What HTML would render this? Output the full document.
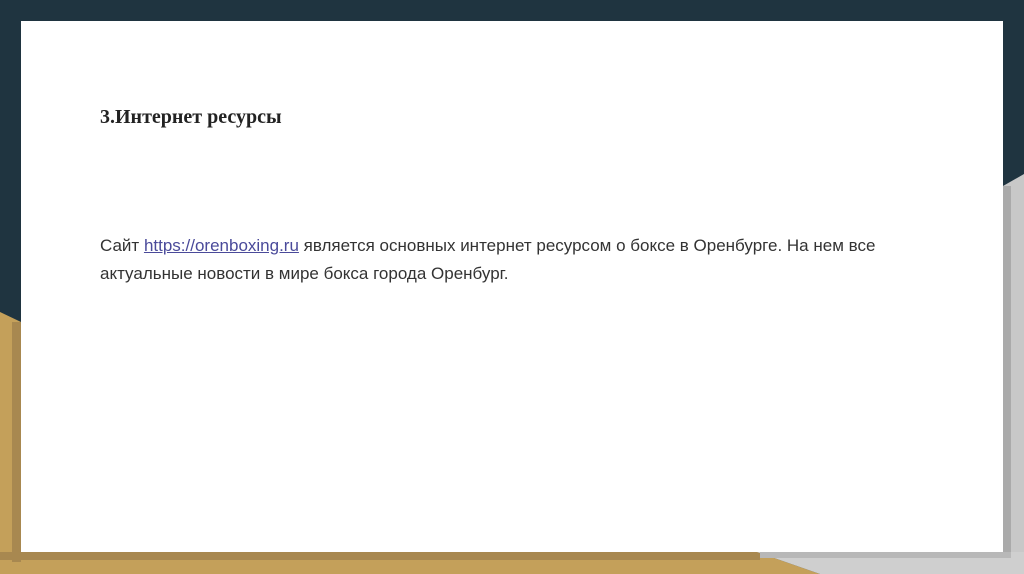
<!DOCTYPE html>
<html><head><meta charset="utf-8"><style>
html,body{margin:0;padding:0;width:1024px;height:574px;overflow:hidden;background:#1f3440;position:relative}
.gold{position:absolute;left:0;top:0;width:1024px;height:574px}
.card{position:absolute;left:21px;top:21px;width:982px;height:531px;background:#fff}
h1{position:absolute;left:100px;top:106px;margin:0;font:bold 20px "Liberation Serif",serif;color:#222;white-space:nowrap}
p{position:absolute;left:100px;top:232px;margin:0;width:900px;font:17px/28px "Liberation Sans",sans-serif;color:#333;white-space:nowrap}
a{color:#4a4a9a;text-decoration:underline}
</style></head><body>
<svg class="gold" width="1024" height="574">
<polygon points="0,312 21,322 21,574 0,574" fill="#c4a05a"/>
<polygon points="1003,186 1024,174 1024,574 1003,574" fill="#c8c8c8"/>
<rect x="1003" y="186" width="8" height="380" fill="#aaa"/>
<polygon points="0,552 757,552 820,574 0,574" fill="#c4a05a"/>
<rect x="0" y="552" width="760" height="8" fill="#a88850"/>
<rect x="12" y="322" width="9" height="240" fill="#a88850"/>
<polygon points="757,552 1024,552 1024,574 820,574" fill="#cfcfcf"/>
<rect x="760" y="552" width="251" height="6" fill="#b8b8b8"/>
</svg>
<div class="card"></div>
<h1>3.Интернет ресурсы</h1>
<p>Сайт <a>https://orenboxing.ru</a> является основных интернет ресурсом о боксе в Оренбурге. На нем все<br>актуальные новости в мире бокса города Оренбург.</p>
</body></html>
